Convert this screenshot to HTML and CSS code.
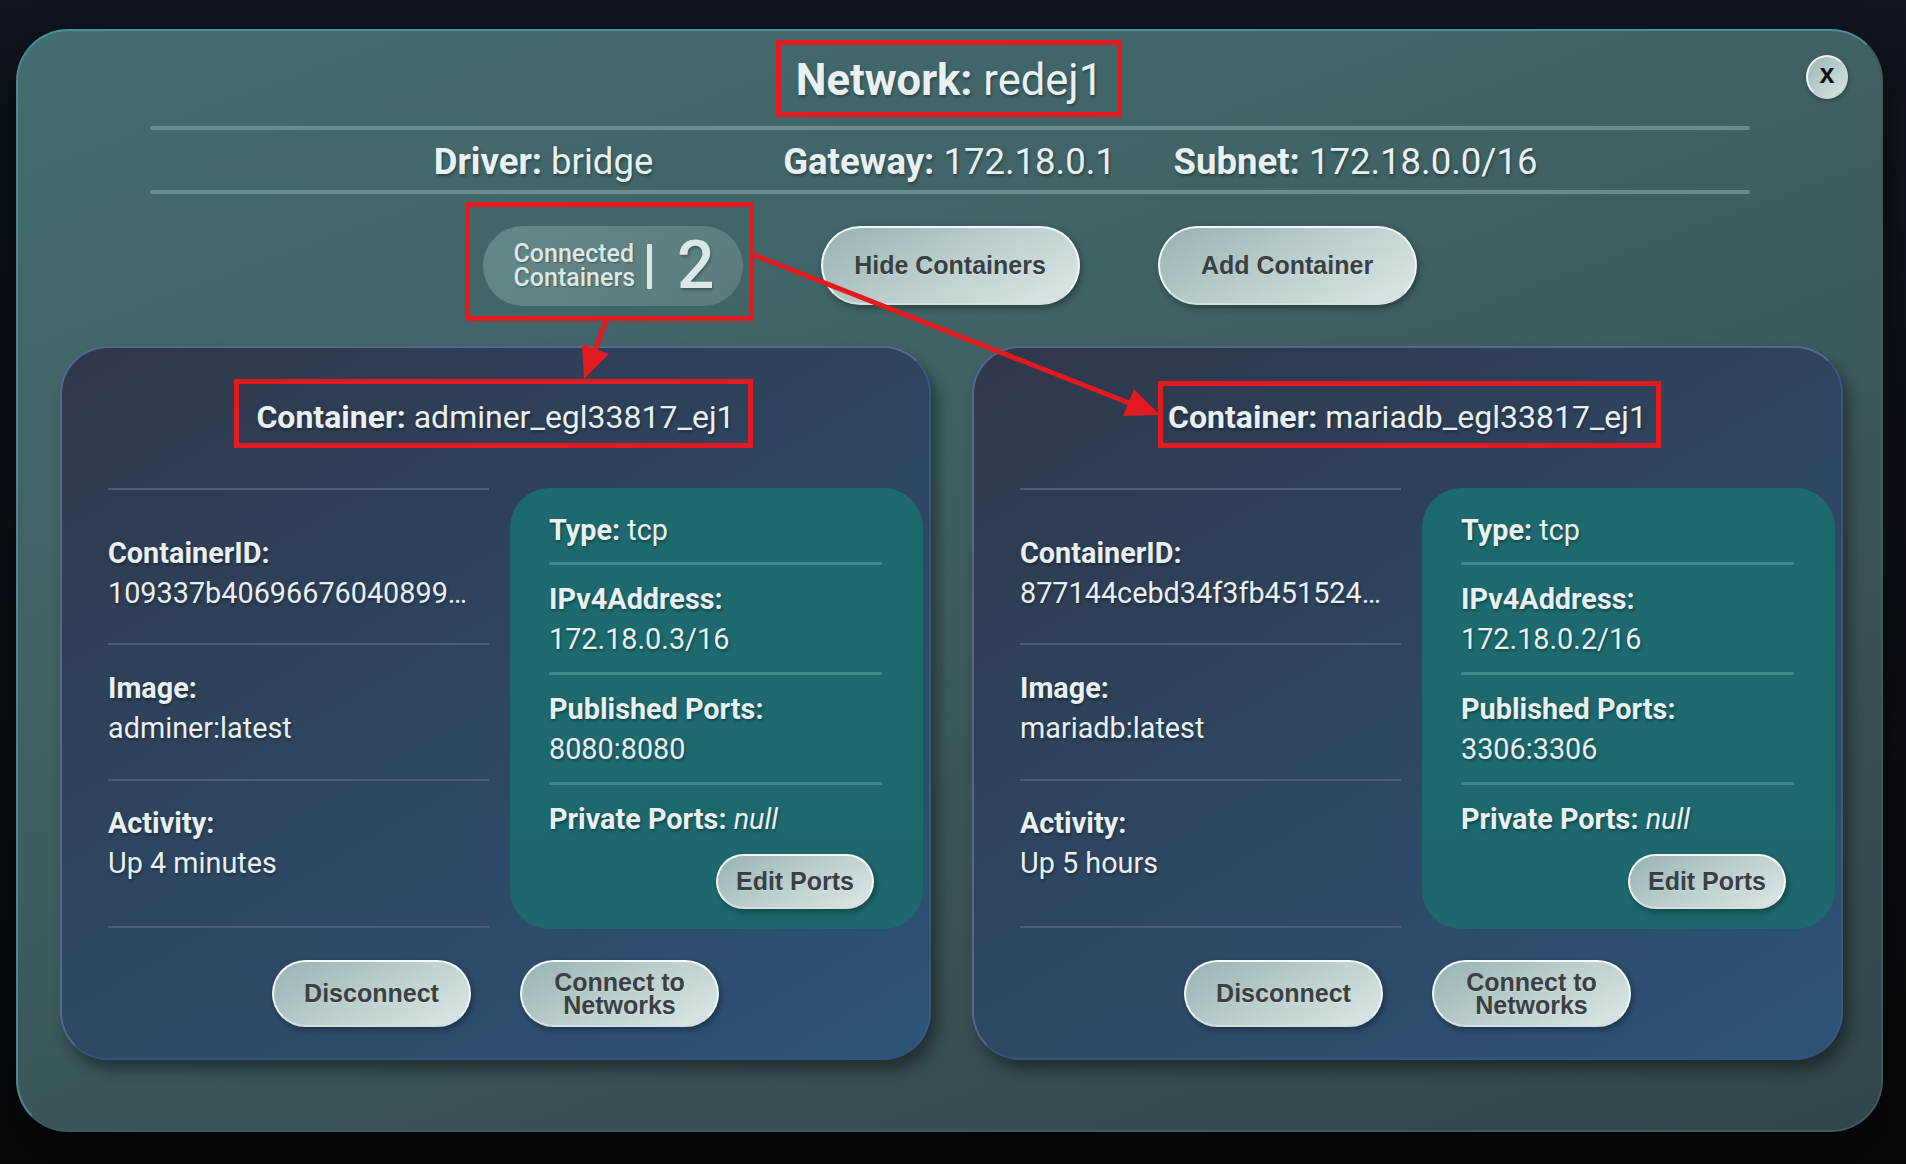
FILE: index.html
```html
<!DOCTYPE html>
<html lang="en">
<head>
<meta charset="utf-8">
<title>Network: redej1</title>
<link rel="stylesheet" href="styles.css">
</head>
<body>
<div class="panel">
  <button class="close">x</button>
  <h1 class="title"><b>Network:</b> redej1</h1>
  <div class="rule"></div>
  <div class="info">
    <div><b>Driver:</b> bridge</div>
    <div><b>Gateway:</b> 172.18.0.1</div>
    <div><b>Subnet:</b> 172.18.0.0/16</div>
  </div>
  <div class="rule"></div>
  <div class="actions">
    <div class="count">
      <span class="count-label"><span class="count-line">Connected</span><span class="count-line">Containers</span></span>
      <span class="count-bar"></span>
      <span class="count-num">2</span>
    </div>
    <button class="btn btn-lg">Hide Containers</button>
    <button class="btn btn-lg">Add Container</button>
  </div>
  <div class="cards">
    <section class="card">
      <h2 class="card-title"><b>Container:</b> adminer_egl33817_ej1</h2>
      <div class="card-body">
        <div class="details">
          <div class="hr"></div>
          <div class="sec"><div class="lbl">ContainerID:</div><div class="val">109337b40696676040899…</div></div>
          <div class="hr"></div>
          <div class="sec"><div class="lbl">Image:</div><div class="val">adminer:latest</div></div>
          <div class="hr"></div>
          <div class="sec"><div class="lbl">Activity:</div><div class="val">Up 4 minutes</div></div>
          <div class="hr"></div>
        </div>
        <div class="ports">
          <div class="row"><b>Type:</b> tcp</div>
          <div class="thr"></div>
          <div class="lbl">IPv4Address:</div><div class="val">172.18.0.3/16</div>
          <div class="thr"></div>
          <div class="lbl">Published Ports:</div><div class="val">8080:8080</div>
          <div class="thr"></div>
          <div class="row"><b>Private Ports:</b> <i>null</i></div>
          <button class="btn btn-edit">Edit Ports</button>
        </div>
      </div>
      <div class="card-foot">
        <button class="btn btn-sm">Disconnect</button>
        <button class="btn btn-sm">Connect to Networks</button>
      </div>
    </section>
    <section class="card">
      <h2 class="card-title"><b>Container:</b> mariadb_egl33817_ej1</h2>
      <div class="card-body">
        <div class="details">
          <div class="hr"></div>
          <div class="sec"><div class="lbl">ContainerID:</div><div class="val">877144cebd34f3fb451524…</div></div>
          <div class="hr"></div>
          <div class="sec"><div class="lbl">Image:</div><div class="val">mariadb:latest</div></div>
          <div class="hr"></div>
          <div class="sec"><div class="lbl">Activity:</div><div class="val">Up 5 hours</div></div>
          <div class="hr"></div>
        </div>
        <div class="ports">
          <div class="row"><b>Type:</b> tcp</div>
          <div class="thr"></div>
          <div class="lbl">IPv4Address:</div><div class="val">172.18.0.2/16</div>
          <div class="thr"></div>
          <div class="lbl">Published Ports:</div><div class="val">3306:3306</div>
          <div class="thr"></div>
          <div class="row"><b>Private Ports:</b> <i>null</i></div>
          <button class="btn btn-edit">Edit Ports</button>
        </div>
      </div>
      <div class="card-foot">
        <button class="btn btn-sm">Disconnect</button>
        <button class="btn btn-sm">Connect to Networks</button>
      </div>
    </section>
  </div>
</div>
<svg class="annot" width="1906" height="1164" viewBox="0 0 1906 1164">
  <g fill="none" stroke="#e11b1f" stroke-width="5">
    <rect x="778.5" y="42.5" width="341" height="72"/>
    <rect x="467.5" y="204.5" width="284" height="114"/>
    <rect x="236.5" y="381.5" width="514" height="64"/>
    <rect x="1160.5" y="383.5" width="498" height="62"/>
    <line x1="606" y1="321" x2="595" y2="350"/>
    <line x1="754" y1="255" x2="1129" y2="403"/>
  </g>
  <g fill="#e11b1f">
    <polygon points="584,379 582,344 609,354"/>
    <polygon points="1160,415 1123,416 1134,389"/>
  </g>
</svg>
</body>
</html>
```
FILE: styles.css
```css
* { box-sizing: border-box; }

html, body {
  margin: 0;
  padding: 0;
}

body {
  width: 1906px;
  height: 1164px;
  overflow: hidden;
  position: relative;
  background: linear-gradient(to bottom, #10141d 0%, #0c1016 60%, #07090c 100%);
  font-family: Roboto, "Noto Sans", sans-serif;
  color: #e8f0f1;
}

.panel {
  position: relative;
  margin: 29px 0 0 16px;
  width: 1867px;
  height: 1103px;
  border: 2px solid #3f5a5d;
  border-top-color: #4c8f97;
  border-left-color: #4a8790;
  border-radius: 52px;
  background: linear-gradient(160deg, #446d70 0%, #3e5f62 45%, #374f53 75%, #32464a 100%);
  box-shadow: 0 22px 40px rgba(0, 0, 0, 0.55);
}

.close {
  position: absolute;
  top: 24px;
  right: 33px;
  width: 42px;
  height: 44px;
  border-radius: 50%;
  border: 2px solid #eef4f4;
  border-right-color: #c9d6d6;
  border-bottom-color: #c9d6d6;
  background: linear-gradient(135deg, #9bb5b5 0%, #dae6e5 100%);
  font-family: "Liberation Sans", Arial, sans-serif;
  font-weight: 700;
  font-size: 27px;
  line-height: 1;
  color: #111;
  padding: 0 0 5px;
  box-shadow: 1px 2px 4px rgba(0, 0, 0, 0.3);
}

.title {
  margin: 25px 0 0;
  height: 50px;
  line-height: 50px;
  font-size: 43.5px;
  font-weight: 400;
  text-align: center;
  text-shadow: 1px 2px 3px rgba(0, 0, 0, 0.35);
}

.title b, .info b, .card-title b, .lbl, .row b { font-weight: 700; }

.rule {
  width: 1600px;
  height: 4px;
  margin: 20px auto 0;
  border-radius: 2px;
  background: #6d8c8e;
}

.info + .rule { margin-top: 0; }

.info {
  display: grid;
  grid-template-columns: repeat(3, 406px);
  justify-content: center;
  height: 60px;
  line-height: 64px;
  font-size: 36.5px;
  text-align: center;
  text-shadow: 1px 2px 3px rgba(0, 0, 0, 0.35);
}

.actions {
  display: flex;
  justify-content: center;
  gap: 78px;
  margin-top: 32px;
  height: 80px;
}

.count {
  display: flex;
  align-items: center;
  width: 260px;
  height: 80px;
  padding-left: 31px;
  border-radius: 40px;
  background: linear-gradient(135deg, #64888a 0%, #5b7b7c 100%);
  color: #dbe8e8;
}

.count-label {
  display: flex;
  flex-direction: column;
  font-size: 25px;
  font-weight: 500;
  text-shadow: 1px 1px 2px rgba(0, 0, 0, 0.3);
}

.count-line {
  display: block;
  height: 24px;
  line-height: 24px;
}

.count-bar {
  width: 5px;
  height: 45px;
  margin-left: 12px;
  background: #dbe8e8;
  border-radius: 1px;
}

.count-num {
  margin-left: 25px;
  font-size: 66px;
  font-weight: 500;
  line-height: 1;
  text-shadow: 1px 2px 3px rgba(0, 0, 0, 0.3);
}

.btn {
  display: flex;
  align-items: center;
  justify-content: center;
  border: 2px solid #f2f7f7;
  border-bottom-color: #d4e0df;
  border-radius: 40px;
  background: linear-gradient(150deg, #97b2b2 0%, #bccfce 50%, #dbe7e6 100%);
  font-family: "Liberation Sans", Arial, sans-serif;
  font-weight: 700;
  font-size: 25px;
  color: #3a3f41;
  text-align: center;
  text-shadow: 0 1px 1px rgba(255, 255, 255, 0.25);
  box-shadow: 2px 3px 6px rgba(0, 0, 0, 0.35);
  padding: 0;
}

.btn-lg {
  width: 259px;
  height: 79px;
}

.cards {
  display: flex;
  gap: 41px;
  margin-top: 40px;
  padding-left: 42px;
}

.card {
  width: 871px;
  height: 714px;
  border: 2px solid #56678f;
  border-bottom-color: #34527a;
  border-right-color: #3a5782;
  border-radius: 48px;
  background: linear-gradient(150deg, #30374b 0%, #2e4560 45%, #2d5478 100%);
  box-shadow: 6px 10px 14px rgba(0, 0, 0, 0.4);
}

.card-title {
  margin: 49px 0 0;
  height: 40px;
  line-height: 40px;
  font-size: 32px;
  font-weight: 400;
  text-align: center;
  text-shadow: 1px 2px 3px rgba(0, 0, 0, 0.35);
}

.card-body {
  display: grid;
  grid-template-columns: 381px 413px;
  column-gap: 21px;
  margin-top: 51px;
  padding-left: 46px;
}

.details {
  display: flex;
  flex-direction: column;
}

.hr {
  height: 2px;
  background: #4c5f77;
}

.sec {
  padding: 23px 0 31px;
}

.sec:nth-child(2) { padding: 43px 0 30px; }
.sec:nth-child(6) { padding: 22px 0 43px; }

.lbl, .val, .row {
  line-height: 40px;
  font-size: 28.8px;
  white-space: nowrap;
  text-shadow: 1px 2px 3px rgba(0, 0, 0, 0.35);
}

.val { font-weight: 400; overflow: hidden; }

.ports {
  display: flex;
  flex-direction: column;
  padding: 22px 41px 20px 39px;
  border-radius: 40px;
  background: linear-gradient(180deg, #1c6a6f 0%, #1e686d 100%);
}

.thr {
  height: 3px;
  margin: 13px 0 14px;
  background: #44878b;
  border-radius: 1px;
}

.ports .row:first-child + .thr { margin-top: 12px; }

.btn-edit {
  align-self: flex-end;
  width: 158px;
  height: 55px;
  margin: 15px 8px 0 0;
}

.card-foot {
  display: flex;
  justify-content: center;
  gap: 49px;
  margin-top: 31px;
}

.btn-sm {
  width: 199px;
  height: 67px;
  line-height: 23px;
  padding: 0 20px;
}

.annot {
  position: absolute;
  left: 0;
  top: 0;
  pointer-events: none;
}
```
